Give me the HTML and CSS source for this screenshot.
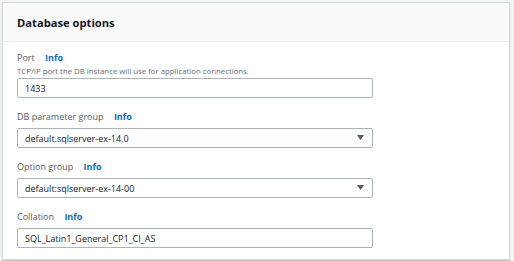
FILE: index.html
```html
<!DOCTYPE html>
<html lang="en">
  <head>
    <meta charset="UTF-8" />
    <meta name="viewport" content="width=device-width, initial-scale=1.0" />
    <title>Database options</title>
    <link rel="stylesheet" href="styles.css">
  </head>
  <body>
    <div class="card">
      <div class="card-header">
        <h2>Database options</h2>
      </div>
      <div class="card-body">
        <div class="field">
          <label>Port <a class="info" href="#">Info</a></label>
          <p class="desc">TCP/IP port the DB instance will use for application connections.</p>
          <input type="text" value="1433" />
        </div>

        <div class="field">
          <label>DB parameter group <a class="info" href="#">Info</a></label>
          <div class="select">
            <span>default.sqlserver-ex-14.0</span>
            <svg class="caret" width="7" height="6" viewBox="0 0 7 6"><path d="M0 0h7L3.5 5z" fill="#545b64"/></svg>
          </div>
        </div>

        <div class="field">
          <label>Option group <a class="info" href="#">Info</a></label>
          <div class="select">
            <span>default:sqlserver-ex-14-00</span>
            <svg class="caret" width="7" height="6" viewBox="0 0 7 6"><path d="M0 0h7L3.5 5z" fill="#545b64"/></svg>
          </div>
        </div>

        <div class="field">
          <label>Collation <a class="info" href="#">Info</a></label>
          <input type="text" value="SQL_Latin1_General_CP1_CI_AS" />
        </div>
      </div>
    </div>
  </body>
</html>
```

FILE: styles.css
```css
body {
  margin: 0;
  padding: 2px 4px 2px 2px;
  background: #f2f3f3;
  font-family: "Open Sans", "Liberation Sans", Arial, sans-serif;
  color: #16191f;
}
.card {
  background: #fff;
  border: 1px solid #d5dbdb;
  box-shadow: 0 1px 1px 0 rgba(0, 28, 36, 0.2);
}
.card-header {
  background: #fafafa;
  border-bottom: 1px solid #eaeded;
  height: 38px;
  display: flex;
  align-items: center;
  padding: 0 14px;
}
.card-header h2 {
  margin: 0;
  font-size: 11.2px;
  font-weight: 700;
  color: #16191f;
}
.card-body {
  padding: 9px 14px 11px;
}
.field {
  margin-bottom: 12px;
}
.field:last-child {
  margin-bottom: 0;
}
label {
  display: block;
  font-size: 9px;
  line-height: 14px;
  color: #545b64;
  margin-bottom: 4px;
}
.info {
  margin-left: 8px;
  color: #0073bb;
  font-weight: 700;
  text-decoration: none;
}
.desc {
  margin: -3px 0 2px;
  font-size: 7.8px;
  line-height: 10px;
  color: #687078;
}
input, .select {
  display: flex;
  align-items: center;
  box-sizing: border-box;
  width: 356px;
  height: 20px;
  margin: 0;
  padding: 0 7px;
  border: 1px solid #aab7b8;
  border-radius: 2px;
  background: #fff;
  font-family: inherit;
  font-size: 9px;
  color: #16191f;
}
.select {
  justify-content: space-between;
}
.caret {
  margin-right: 1px;
}
```
